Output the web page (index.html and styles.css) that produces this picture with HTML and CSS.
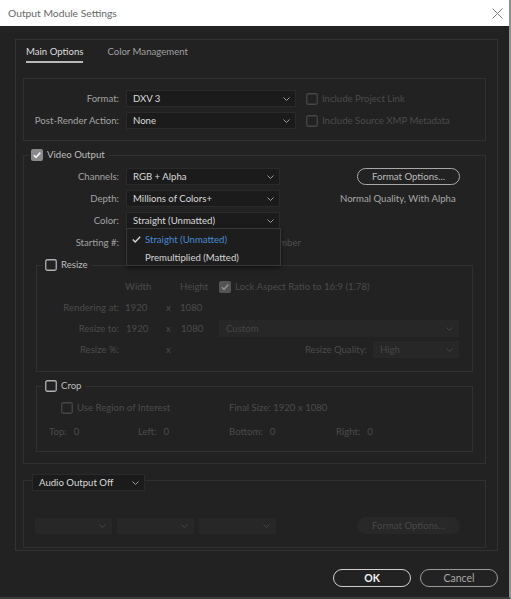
FILE: index.html
```html
<!DOCTYPE html>
<html>
<head>
<meta charset="utf-8">
<title>Output Module Settings</title>
<link rel="stylesheet" href="styles.css">
</head>
<body>
<div class="window">
  <div class="titlebar">
    <span class="title">Output Module Settings</span>
    <svg class="close" width="11" height="11" viewBox="0 0 11 11"><path d="M0.5 0.5L10.5 10.5M10.5 0.5L0.5 10.5" stroke="#7c7c7c" stroke-width="1" fill="none"/></svg>
  </div>
  <div class="content">
    <div class="panel">
      <div class="tabs">
        <span class="tab active">Main Options</span>
        <span class="tab">Color Management</span>
      </div>

      <div class="box format-box">
        <div class="frow">
          <span class="lbl flbl">Format:</span>
          <div class="select fsel"><span class="val">DXV 3</span><svg class="chev" width="7" height="4" viewBox="0 0 7 4"><polyline points="0.5,0.5 3.5,3.5 6.5,0.5" fill="none" stroke="#9a9a9a" stroke-width="1"/></svg></div>
          <span class="cbl dis"><svg class="cb" width="12" height="12" viewBox="0 0 12 12"><rect x="0.75" y="0.75" width="10.5" height="10.5" rx="1.5" fill="none" stroke="#464646" stroke-width="1.3"/></svg>Include Project Link</span>
        </div>
        <div class="frow">
          <span class="lbl flbl">Post-Render Action:</span>
          <div class="select fsel"><span class="val">None</span><svg class="chev" width="7" height="4" viewBox="0 0 7 4"><polyline points="0.5,0.5 3.5,3.5 6.5,0.5" fill="none" stroke="#9a9a9a" stroke-width="1"/></svg></div>
          <span class="cbl dis"><svg class="cb" width="12" height="12" viewBox="0 0 12 12"><rect x="0.75" y="0.75" width="10.5" height="10.5" rx="1.5" fill="none" stroke="#464646" stroke-width="1.3"/></svg>Include Source XMP Metadata</span>
        </div>
      </div>

      <div class="group video">
        <div class="ghead vhead">
          <svg class="cb" width="12" height="12" viewBox="0 0 12 12"><rect x="0" y="0" width="12" height="12" rx="2" fill="#8a8a8a"/><polyline points="2.8,6.2 5,8.4 9.3,3.6" fill="none" stroke="#f2f2f2" stroke-width="1.6"/></svg>
          <span class="gtitle">Video Output</span>
        </div>
        <div class="vbody">
          <div class="vrow">
            <span class="lbl">Channels:</span>
            <div class="select"><span class="val">RGB + Alpha</span><svg class="chev" width="7" height="4" viewBox="0 0 7 4"><polyline points="0.5,0.5 3.5,3.5 6.5,0.5" fill="none" stroke="#9a9a9a" stroke-width="1"/></svg></div>
            <div class="right"><span class="btn fo">Format Options...</span></div>
          </div>
          <div class="vrow">
            <span class="lbl">Depth:</span>
            <div class="select"><span class="val">Millions of Colors+</span><svg class="chev" width="7" height="4" viewBox="0 0 7 4"><polyline points="0.5,0.5 3.5,3.5 6.5,0.5" fill="none" stroke="#9a9a9a" stroke-width="1"/></svg></div>
            <div class="right"><span class="quality">Normal Quality, With Alpha</span></div>
          </div>
          <div class="vrow">
            <span class="lbl">Color:</span>
            <div class="select open"><span class="val">Straight (Unmatted)</span><svg class="chev" width="7" height="4" viewBox="0 0 7 4"><polyline points="0.5,0.5 3.5,3.5 6.5,0.5" fill="none" stroke="#9a9a9a" stroke-width="1"/></svg>
              <div class="menu">
                <div class="item sel"><svg class="tick" width="9" height="7" viewBox="0 0 9 7"><polyline points="0.8,3.6 3.2,6 8.2,0.8" fill="none" stroke="#d8d8d8" stroke-width="1.4"/></svg>Straight (Unmatted)</div>
                <div class="item plain">Premultiplied (Matted)</div>
              </div>
            </div>
            <div class="right"></div>
          </div>
          <div class="vrow">
            <span class="lbl">Starting #:</span>
            <span class="usecomp">Use Comp Frame Number</span>
          </div>

          <div class="group sub resize">
            <div class="ghead shead">
              <svg class="cb" width="12" height="12" viewBox="0 0 12 12"><rect x="0.75" y="0.75" width="10.5" height="10.5" rx="1.5" fill="none" stroke="#b0b0b0" stroke-width="1.3"/></svg>
              <span class="gtitle">Resize</span>
            </div>
            <div class="rbody">
              <div class="rrow">
                <span></span>
                <span class="c2 dim">Width</span>
                <span></span>
                <span class="c4 dim">Height</span>
                <span class="cbl dis lock"><svg class="cb" width="12" height="12" viewBox="0 0 12 12"><rect x="0" y="0" width="12" height="12" rx="2" fill="#545454"/><polyline points="2.8,6.2 5,8.4 9.3,3.6" fill="none" stroke="#8c8c8c" stroke-width="1.6"/></svg>Lock Aspect Ratio to 16:9 (1.78)</span>
              </div>
              <div class="rrow">
                <span class="lbl dim">Rendering at:</span>
                <span class="c2 dim">1920</span>
                <span class="c3 dim">x</span>
                <span class="c4 dim">1080</span>
                <span></span>
              </div>
              <div class="rrow">
                <span class="lbl dim">Resize to:</span>
                <span class="c2 dim inp">1920</span>
                <span class="c3 dim">x</span>
                <span class="c4 dim inp">1080</span>
                <div class="select disabled"><span class="val">Custom</span><svg class="chev" width="7" height="4" viewBox="0 0 7 4"><polyline points="0.5,0.5 3.5,3.5 6.5,0.5" fill="none" stroke="#454545" stroke-width="1"/></svg></div>
              </div>
              <div class="rrow">
                <span class="lbl dim">Resize %:</span>
                <span></span>
                <span class="c3 dim">x</span>
                <span></span>
                <div class="rq">
                  <span class="dim">Resize Quality:</span>
                  <div class="select disabled qsel"><span class="val">High</span><svg class="chev" width="7" height="4" viewBox="0 0 7 4"><polyline points="0.5,0.5 3.5,3.5 6.5,0.5" fill="none" stroke="#454545" stroke-width="1"/></svg></div>
                </div>
              </div>
            </div>
          </div>

          <div class="group sub crop">
            <div class="ghead shead">
              <svg class="cb" width="12" height="12" viewBox="0 0 12 12"><rect x="0.75" y="0.75" width="10.5" height="10.5" rx="1.5" fill="none" stroke="#b0b0b0" stroke-width="1.3"/></svg>
              <span class="gtitle">Crop</span>
            </div>
            <div class="cbody">
              <div class="crow">
                <span class="cbl dis roi"><svg class="cb" width="12" height="12" viewBox="0 0 12 12"><rect x="0.75" y="0.75" width="10.5" height="10.5" rx="1.5" fill="none" stroke="#464646" stroke-width="1.3"/></svg>Use Region of Interest</span>
                <span class="dim final">Final Size: 1920 x 1080</span>
              </div>
              <div class="crow">
                <span class="cell dim">Top:<span>0</span></span>
                <span class="cell dim">Left:<span>0</span></span>
                <span class="cell dim">Bottom:<span>0</span></span>
                <span class="cell dim">Right:<span>0</span></span>
              </div>
            </div>
          </div>
        </div>
      </div>

      <div class="group audio">
        <div class="ghead ahead">
          <div class="select asel"><span class="val">Audio Output Off</span><svg class="chev" width="7" height="4" viewBox="0 0 7 4"><polyline points="0.5,0.5 3.5,3.5 6.5,0.5" fill="none" stroke="#9a9a9a" stroke-width="1"/></svg></div>
        </div>
        <div class="abody">
          <div class="select disabled small"><span class="val"></span><svg class="chev" width="7" height="4" viewBox="0 0 7 4"><polyline points="0.5,0.5 3.5,3.5 6.5,0.5" fill="none" stroke="#454545" stroke-width="1"/></svg></div>
          <div class="select disabled small"><span class="val"></span><svg class="chev" width="7" height="4" viewBox="0 0 7 4"><polyline points="0.5,0.5 3.5,3.5 6.5,0.5" fill="none" stroke="#454545" stroke-width="1"/></svg></div>
          <div class="select disabled small"><span class="val"></span><svg class="chev" width="7" height="4" viewBox="0 0 7 4"><polyline points="0.5,0.5 3.5,3.5 6.5,0.5" fill="none" stroke="#454545" stroke-width="1"/></svg></div>
          <span class="btn fo-dis">Format Options...</span>
        </div>
      </div>
    </div>

    <div class="footer">
      <span class="btn ok">OK</span>
      <span class="btn cancel">Cancel</span>
    </div>
  </div>
</div>
</body>
</html>
```

FILE: styles.css
```css
* { box-sizing: border-box; }

html, body {
  margin: 0;
  padding: 0;
  background: #222222;
}

body {
  font-family: Lato, "Liberation Sans", sans-serif;
  font-size: 9.6px;
  color: #a2a2a2;
}

.window {
  width: 511px;
  height: 599px;
  background: #222222;
  border-right: 2px solid #8e8e8e;
  border-bottom: 2px solid #3a3a3a;
  display: flex;
  flex-direction: column;
  overflow: hidden;
}

.titlebar {
  height: 26px;
  flex: none;
  background: #ffffff;
  display: flex;
  align-items: center;
  justify-content: space-between;
  padding: 0 6px 0 8px;
}

.title {
  font-size: 10.3px;
  color: #666666;
}

.close { display: block; }

.content {
  padding: 13px 11px 0 15px;
}

.panel {
  border: 1px solid #333333;
  padding: 0 11px 2px 7px;
}

.tabs {
  display: flex;
  gap: 24px;
  padding: 5px 0 0 3px;
  margin-bottom: 15px;
}

.tab {
  line-height: 14px;
  padding-bottom: 2px;
  border-bottom: 2px solid transparent;
  color: #a0a0a0;
}

.tab.active {
  color: #dedede;
  border-bottom-color: #b8b8b8;
}

.box {
  border: 1px solid #303030;
}

.format-box {
  padding: 11px 0 11px 0;
  display: flex;
  flex-direction: column;
  gap: 5px;
}

.frow {
  display: flex;
  align-items: center;
  height: 17px;
}

.flbl {
  width: 95px;
  text-align: right;
}

.fsel {
  width: 170px;
  margin-left: 7px;
}

.frow .cbl {
  margin-left: 10px;
}

.lbl {
  text-align: right;
  white-space: nowrap;
}

.select {
  position: relative;
  height: 17px;
  background: #1b1b1b;
  border: 1px solid #2a2a2a;
  display: flex;
  align-items: center;
  justify-content: space-between;
  padding: 0 5px 0 6px;
  color: #dadada;
  line-height: 15px;
}

.select .val {
  white-space: nowrap;
}

.chev {
  display: block;
  flex: none;
}

.select.disabled {
  background: #272727;
  border-color: #272727;
  color: #464646;
}

.cbl {
  display: flex;
  align-items: center;
  gap: 4px;
  white-space: nowrap;
}

.cb {
  display: block;
  flex: none;
}

.dis, .dim {
  color: #4b4b4b;
}

.group {
  border: 1px solid #303030;
}

.ghead {
  display: flex;
  align-items: center;
  gap: 4px;
  width: fit-content;
  height: 12px;
  margin-top: -7px;
  background: #222222;
  padding: 0 4px 0 2px;
}

.gtitle {
  color: #bdbdbd;
  line-height: 12px;
}

.video {
  margin-top: 14px;
}

.vhead {
  margin-left: 5px;
}

.vbody {
  padding: 7px 12px 11px 12px;
  display: flex;
  flex-direction: column;
}

.vrow {
  display: grid;
  grid-template-columns: 83px 154px 1fr;
  column-gap: 7px;
  align-items: center;
  height: 17px;
  margin-bottom: 5px;
}

.vrow:nth-child(4) {
  margin-bottom: 0;
}

.right {
  display: flex;
  align-items: center;
}

.btn {
  display: flex;
  align-items: center;
  justify-content: center;
  white-space: nowrap;
}

.fo {
  margin-left: 70px;
  width: 103px;
  height: 17px;
  border: 1px solid #a8a8a8;
  border-radius: 9px;
  color: #bcbcbc;
}

.quality {
  margin-left: 53px;
  color: #a8a8a8;
  white-space: nowrap;
}

.usecomp {
  grid-column: 2 / 4;
  padding-left: 66px;
  color: #4e4e4e;
  white-space: nowrap;
}

.menu {
  position: absolute;
  top: 15px;
  left: -1px;
  width: 155px;
  height: 38px;
  background: #1d1d1d;
  border: 1px solid #383838;
  box-shadow: 0 2px 4px rgba(0, 0, 0, 0.5);
  padding: 1px 0;
  z-index: 5;
}

.item {
  height: 18px;
  display: flex;
  align-items: center;
  white-space: nowrap;
}

.item.sel {
  padding-left: 5px;
  gap: 4px;
  color: #4a89d3;
}

.tick { display: block; flex: none; }

.item.plain {
  padding-left: 18px;
  color: #d6d6d6;
}

.sub {
  margin-top: 14px;
}

.shead {
  margin-left: 6px;
}

.rbody {
  padding: 5px 12px 11px 0;
}

.rrow {
  display: grid;
  grid-template-columns: 83px 41px 14px 44px 240px;
  align-items: center;
  height: 21px;
}

.rrow .lbl {
  padding-right: 1px;
}

.c2, .c3, .c4 {
  padding-left: 5px;
  white-space: nowrap;
}

.inp { padding-left: 6px; }

.rrow .select {
  height: 17px;
}

.rq {
  display: flex;
  align-items: center;
  justify-content: flex-end;
  gap: 6px;
}

.qsel {
  width: 86px;
}

.crop {
  margin-top: 14px;
}

.cbody {
  padding: 5px 0 9px 12px;
  display: flex;
  flex-direction: column;
  gap: 3px;
}

.crow {
  display: grid;
  grid-template-columns: 89px 91px 107px 1fr;
  align-items: center;
  height: 21px;
}

.roi {
  grid-column: 1 / 3;
  padding-left: 12px;
}

.final {
  grid-column: 3 / 5;
  white-space: nowrap;
}

.cell {
  display: flex;
  gap: 7px;
  white-space: nowrap;
}

.audio {
  margin-top: 16px;
}

.ahead {
  height: 17px;
  margin-left: 8px;
  padding: 0;
  background: transparent;
}

.asel {
  width: 113px;
}

.abody {
  display: flex;
  align-items: center;
  gap: 5px;
  padding: 26px 0 13px 11px;
}

.small {
  width: 77px;
  height: 16px;
}

.fo-dis {
  margin-left: 76px;
  width: 103px;
  height: 17px;
  border-radius: 9px;
  background: #282828;
  color: #474747;
}

.footer {
  display: flex;
  justify-content: flex-end;
  gap: 9px;
  margin-top: 18px;
}

.ok, .cancel {
  width: 78px;
  height: 18px;
  border-radius: 9px;
  font-size: 10.5px;
}

.ok {
  border: 1.5px solid #d0d0d0;
  color: #f2f2f2;
  font-weight: 700;
}

.cancel {
  border: 1.5px solid #9a9a9a;
  color: #a8a8a8;
}
```
